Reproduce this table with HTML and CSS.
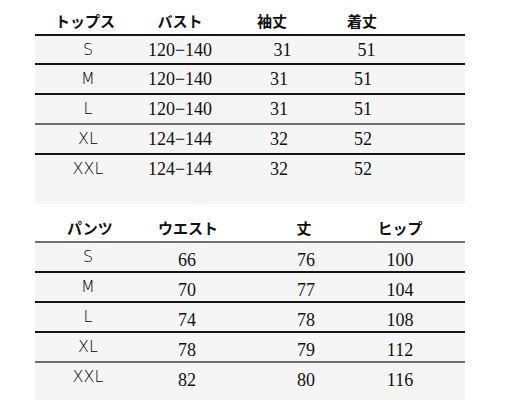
FILE: index.html
```html
<!DOCTYPE html>
<html lang="ja">
<head>
<meta charset="utf-8">
<link rel="stylesheet" href="styles.css">
</head>
<body>
<div class="page">
  <section class="table tops">
    <div class="head">
      <span>トップス</span><span>バスト</span><span>袖丈</span><span>着丈</span>
    </div>
    <div class="panel">
      <div class="row line-dark first"><span class="sz">S</span><span class="num">120−140</span><span class="num shift">31</span><span class="num shift">51</span></div>
      <div class="row line-dark"><span class="sz">M</span><span class="num">120−140</span><span class="num">31</span><span class="num">51</span></div>
      <div class="row line-dark"><span class="sz">L</span><span class="num">120−140</span><span class="num">31</span><span class="num">51</span></div>
      <div class="row line-gray"><span class="sz">XL</span><span class="num">124−144</span><span class="num">32</span><span class="num">52</span></div>
      <div class="row line-dark"><span class="sz">XXL</span><span class="num">124−144</span><span class="num">32</span><span class="num">52</span></div>
    </div>
  </section>
  <section class="table pants">
    <div class="head">
      <span>パンツ</span><span>ウエスト</span><span>丈</span><span>ヒップ</span>
    </div>
    <div class="panel">
      <div class="row line-gray"><span class="sz">S</span><span class="num">66</span><span class="num">76</span><span class="num">100</span></div>
      <div class="row line-dark"><span class="sz">M</span><span class="num">70</span><span class="num">77</span><span class="num">104</span></div>
      <div class="row line-dark"><span class="sz">L</span><span class="num">74</span><span class="num">78</span><span class="num">108</span></div>
      <div class="row line-dark"><span class="sz">XL</span><span class="num">78</span><span class="num">79</span><span class="num">112</span></div>
      <div class="row line-gray"><span class="sz">XXL</span><span class="num">82</span><span class="num">80</span><span class="num">116</span></div>
    </div>
  </section>
</div>
</body>
</html>
```
FILE: styles.css
```css
html, body {
  margin: 0;
  padding: 0;
  background: #ffffff;
}
body {
  width: 513px;
  height: 400px;
  overflow: hidden;
  color: #111111;
  font-family: "Noto Sans CJK JP", "Noto Sans", sans-serif;
}
.page {
  padding-left: 35px;
  width: 430px;
  display: flex;
  flex-direction: column;
}
.head {
  display: grid;
  align-items: center;
  font-family: "Noto Sans CJK JP", sans-serif;
  font-weight: 700;
  font-size: 15px;
  text-align: center;
}
.tops .head {
  height: 34px;
  grid-template-columns: 100px 90px 94px 86px;
  padding-top: 6px;
  box-sizing: border-box;
}
.pants .head {
  height: 37px;
  grid-template-columns: 110px 86px 146px 46px;
  padding-top: 10px;
  box-sizing: border-box;
}
.panel {
  background: #f5f5f5;
}
.tops .panel {
  padding-bottom: 21px;
}
.pants .panel {
  padding-bottom: 9px;
}
.row {
  display: grid;
  align-items: center;
  height: 30px;
  box-sizing: border-box;
  text-align: center;
}
.row.first {
  height: 29px;
}
.tops .row {
  grid-template-columns: 106px 78px 120px 48px;
}
.pants .row {
  grid-template-columns: 106px 92px 146px 42px;
}
.line-dark {
  border-top: 2px solid #151515;
}
.line-gray {
  border-top: 2px solid #6e6e6e;
}
.sz {
  font-family: "DejaVu Sans", "Noto Sans", sans-serif;
  font-weight: 200;
  font-size: 16px;
  line-height: 1;
  color: #000000;
}
.num {
  font-family: "Liberation Serif", serif;
  font-size: 18px;
  line-height: 1;
}
.pants .num {
  padding-top: 5px;
}
.num.shift {
  padding-left: 7px;
}
```
